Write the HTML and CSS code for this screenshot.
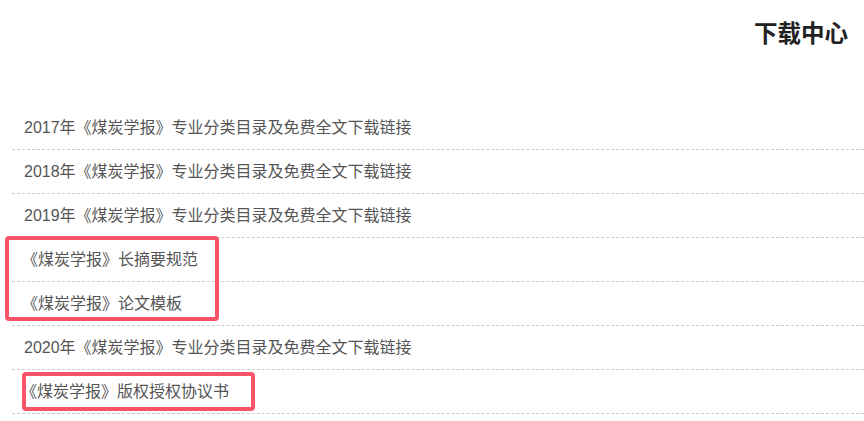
FILE: index.html
```html
<!DOCTYPE html>
<html lang="zh-CN">
<head>
    <meta charset="utf-8" />
    <meta name="viewport" content="width=device-width, initial-scale=1" />
    <title>下载中心</title>
    <link rel="stylesheet" href="styles.css">
</head>
<body>
    <div class="page">
        <h2 class="title">下载中心</h2>

        <ul class="list">
            <li><a href="#">2017年《煤炭学报》专业分类目录及免费全文下载链接</a></li>
            <li><a href="#">2018年《煤炭学报》专业分类目录及免费全文下载链接</a></li>
            <li><a href="#">2019年《煤炭学报》专业分类目录及免费全文下载链接</a></li>
            <li><a href="#" class="shift">《煤炭学报》长摘要规范</a></li>
            <li><a href="#" class="shift">《煤炭学报》论文模板</a></li>
            <li><a href="#">2020年《煤炭学报》专业分类目录及免费全文下载链接</a></li>
            <li><a href="#" class="shift-sm">《煤炭学报》版权授权协议书</a></li>
        </ul>

        <!-- highlight marks drawn over the list -->
        <div class="mark mark-a"></div>
        <div class="mark mark-b"></div>
    </div>
</body>
</html>
```

FILE: styles.css
```css
body {
    margin: 0;
    background: #fff;
    font-family: "Liberation Sans", "Noto Sans CJK SC", sans-serif;
}
.page {
    position: relative;
    width: 864px;
    height: 421px;
    overflow: hidden;
}
.title {
    margin: 0;
    height: 106px;
    padding: 19px 16px 0 0;
    box-sizing: border-box;
    text-align: right;
    font-size: 23.5px;
    line-height: 30px;
    font-weight: bold;
    color: #222;
}
.list {
    list-style: none;
    margin: 0 0 0 12px;
    padding: 0;
}
.list li {
    height: 39px;
    padding: 0 0 4px 12px;
    border-bottom: 1px dashed #ccc;
    display: flex;
    align-items: center;
}
.list a {
    color: #555;
    font-size: 16px;
    text-decoration: none;
}
.list a.shift {
    margin-left: -2px;
}
.list a.shift-sm {
    margin-left: -3px;
}
.mark {
    position: absolute;
    border: 4px solid #fa5469;
    border-radius: 4px;
    box-sizing: border-box;
}
.mark-a {
    left: 5px;
    top: 236px;
    width: 214px;
    height: 85px;
}
.mark-b {
    left: 22px;
    top: 372px;
    width: 233px;
    height: 39px;
}
```
